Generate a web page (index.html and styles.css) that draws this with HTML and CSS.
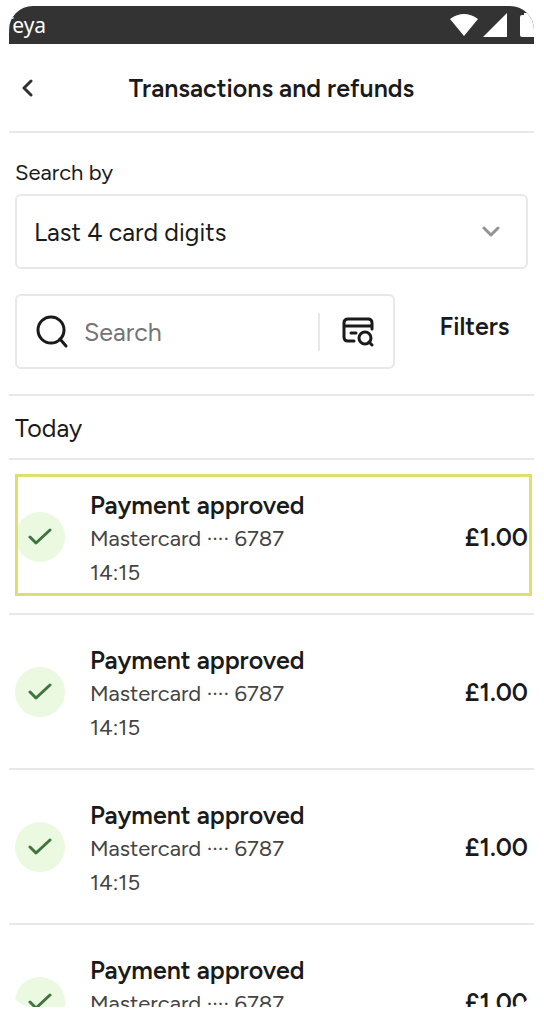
FILE: index.html
```html
<!DOCTYPE html>
<html lang="en">
<head>
    <meta charset="UTF-8">
    <meta name="viewport" content="width=device-width, initial-scale=1">
    <title>Transactions and refunds</title>
    <link rel="stylesheet" href="styles.css">
</head>
<body>
    <div class="phone">
        <div class="status-bar">
            <span class="carrier">Teya</span>
            <svg class="status-icons" width="84" height="24" viewBox="0 0 84 24" fill="#fff">
                <path d="M0 6Q14 -4 28 6L14 23Z"/>
                <path d="M57 0V24H33Z"/>
                <path d="M74 0H84V24H72Q70 24 70 22V4Q70 2 72 2H74Z"/>
            </svg>
        </div>
        <header class="header">
            <button class="back" type="button" aria-label="Back">
                <svg width="12" height="18" viewBox="0 0 12 18"><path d="M10 2L3 9L10 16"/></svg>
            </button>
            <h1 class="title">Transactions and refunds</h1>
        </header>
        <form class="search">
            <label class="search-label" for="search-by">Search by</label>
            <div class="select-box">
                <select class="select" id="search-by">
                    <option>Last 4 card digits</option>
                </select>
                <svg class="chevron" width="18" height="12" viewBox="0 0 18 12"><path d="M2 2L9 9L16 2"/></svg>
            </div>
            <div class="search-row">
                <div class="search-box">
                    <svg class="search-icon" width="34" height="34" viewBox="0 0 34 34">
                        <circle cx="16" cy="15" r="13"/>
                        <path d="M25 24L31 31"/>
                    </svg>
                    <input class="search-input" type="text" placeholder="Search" aria-label="Search">
                    <button class="card-search" type="button" aria-label="Search by card">
                        <svg width="34" height="30" viewBox="0 0 34 30">
                            <path d="M14 24H8Q4 24 4 20V6Q4 2 8 2H28Q32 2 32 6V12M4 9H32M11 16H16"/>
                            <circle cx="25" cy="21" r="6"/>
                            <path d="M29 25L32 28"/>
                        </svg>
                    </button>
                </div>
                <button class="filters" type="button">Filters</button>
            </div>
        </form>
        <h2 class="day">Today</h2>
        <ul class="list">
            <li class="item active">
                <span class="badge"><svg width="24" height="18" viewBox="0 0 24 18"><path d="M2 9L8 15L22 2"/></svg></span>
                <div class="info">
                    <h3 class="name">Payment approved</h3>
                    <p>Mastercard ···· 6787</p>
                    <p>14:15</p>
                </div>
                <span class="price">£1.00</span>
            </li>
            <li class="item">
                <span class="badge"><svg width="24" height="18" viewBox="0 0 24 18"><path d="M2 9L8 15L22 2"/></svg></span>
                <div class="info">
                    <h3 class="name">Payment approved</h3>
                    <p>Mastercard ···· 6787</p>
                    <p>14:15</p>
                </div>
                <span class="price">£1.00</span>
            </li>
            <li class="item">
                <span class="badge"><svg width="24" height="18" viewBox="0 0 24 18"><path d="M2 9L8 15L22 2"/></svg></span>
                <div class="info">
                    <h3 class="name">Payment approved</h3>
                    <p>Mastercard ···· 6787</p>
                    <p>14:15</p>
                </div>
                <span class="price">£1.00</span>
            </li>
            <li class="item">
                <span class="badge"><svg width="24" height="18" viewBox="0 0 24 18"><path d="M2 9L8 15L22 2"/></svg></span>
                <div class="info">
                    <h3 class="name">Payment approved</h3>
                    <p>Mastercard ···· 6787</p>
                    <p>14:15</p>
                </div>
                <span class="price">£1.00</span>
            </li>
        </ul>
    </div>
</body>
</html>
```
FILE: styles.css
```css
*{
    margin: 0;
    padding: 0;
    box-sizing: border-box;
}
body{
    height: 100vh;
    padding: 6px 10px 9px 9px;
    background: #fff;
    color: #1a1a1a;
    font-family: Figtree, Lato, "Liberation Sans", sans-serif;
    font-size: 25px;
}
button,input,select{
    border: 0;
    background: none;
    color: inherit;
    font: inherit;
}
svg{
    display: block;
    flex: none;
}
.phone{
    height: 100%;
    overflow: hidden;
    border-radius: 24px;
}
.status-bar{
    display: flex;
    align-items: center;
    justify-content: space-between;
    height: 38px;
    background: #333;
}
.carrier{
    margin-left: -7px;
    color: #fff;
    font-family: "Noto Sans", sans-serif;
    font-size: 21px;
}
.header{
    display: flex;
    align-items: center;
    height: 89px;
    padding: 0 12px;
    border-bottom: 2px solid #e8e8e8;
}
.back{
    width: 24px;
}
.back path,.chevron path,.search-icon,.card-search svg,.badge path{
    fill: none;
    stroke: #1a1a1a;
    stroke-width: 3;
    stroke-linecap: round;
    stroke-linejoin: round;
}
.back path{
    stroke: #333;
}
.title{
    flex: 1;
    padding-right: 24px;
    font-size: 25px;
    font-weight: 600;
    text-align: center;
}
.search{
    padding: 25px 6px;
    border-bottom: 2px solid #e8e8e8;
}
.search-label{
    display: block;
    font-size: 22px;
    line-height: 30px;
    margin-bottom: 6px;
}
.select-box{
    position: relative;
    margin-bottom: 25px;
}
.select{
    width: 100%;
    height: 75px;
    padding: 0 17px;
    border: 2px solid #e8e8e8;
    border-radius: 6px;
    appearance: none;
}
.chevron{
    position: absolute;
    top: 32px;
    right: 28px;
    pointer-events: none;
}
.chevron path{
    stroke: #949494;
}
.search-row{
    display: flex;
}
.search-box{
    display: flex;
    flex: 1;
    align-items: center;
    min-width: 0;
    height: 75px;
    padding-left: 18px;
    border: 2px solid #e8e8e8;
    border-radius: 6px;
}
.search-input{
    flex: 1;
    min-width: 0;
    padding-left: 15px;
    outline: 0;
}
.search-input::placeholder{
    color: #757575;
    opacity: 1;
}
.card-search{
    display: flex;
    flex: none;
    align-items: center;
    justify-content: center;
    width: 75px;
    height: 38px;
    border-left: 2px solid #e8e8e8;
}
.filters{
    flex: none;
    width: 133px;
    padding: 0 0 12px 26px;
    font-weight: 600;
}
.day{
    height: 64px;
    padding: 0 6px;
    border-bottom: 2px solid #e8e8e8;
    font-size: 25px;
    font-weight: 400;
    line-height: 64px;
}
.list{
    list-style: none;
}
.item{
    display: flex;
    align-items: center;
    position: relative;
    height: 155px;
    padding: 0 6px;
    border-bottom: 2px solid #e8e8e8;
}
.active::after{
    content: "";
    position: absolute;
    top: 14px;
    right: 2px;
    bottom: 17px;
    left: 6px;
    border: 3px solid #dde06c;
}
.badge{
    display: flex;
    align-items: center;
    justify-content: center;
    width: 50px;
    height: 50px;
    border-radius: 50%;
    background: #eaf9df;
}
.badge path{
    stroke: #41753f;
}
.info{
    flex: 1;
    margin-left: 25px;
    padding-top: 4px;
    color: #444;
    font-size: 22px;
    line-height: 34px;
}
.name{
    color: #1a1a1a;
    font-size: 25px;
    font-weight: 600;
}
.price{
    font-weight: 600;
}
```
